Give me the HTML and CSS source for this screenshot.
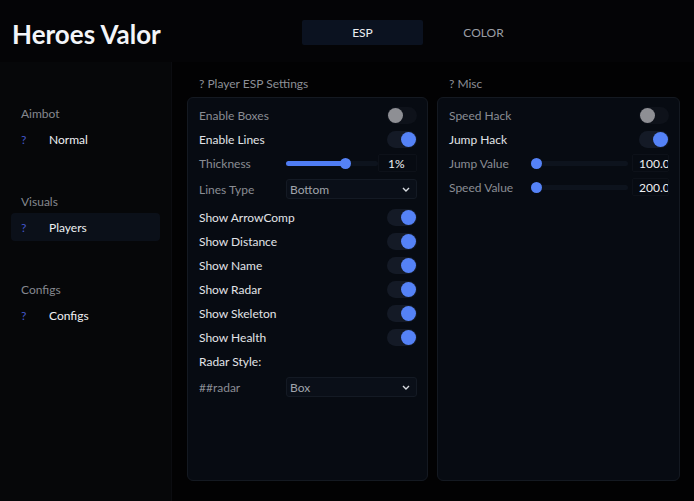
FILE: index.html
```html
<!DOCTYPE html>
<html>
<head>
<meta charset="utf-8">
<link rel="stylesheet" href="styles.css">
</head>
<body>
<div class="app">
  <header class="header">
    <div class="title">Heroes Valor</div>
    <nav class="tabs">
      <div class="tab active">ESP</div>
      <div class="tab">COLOR</div>
    </nav>
  </header>
  <div class="body">
    <aside class="sidebar">
      <div class="group">
        <div class="group-label">Aimbot</div>
        <div class="nav-item"><span class="q">?</span><span>Normal</span></div>
      </div>
      <div class="group">
        <div class="group-label">Visuals</div>
        <div class="nav-item selected"><span class="q">?</span><span>Players</span></div>
      </div>
      <div class="group">
        <div class="group-label">Configs</div>
        <div class="nav-item"><span class="q">?</span><span>Configs</span></div>
      </div>
    </aside>
    <main class="main">
      <section class="column col-left">
        <div class="heading">? Player ESP Settings</div>
        <div class="panel">
          <div class="row"><span class="label dim">Enable Boxes</span><span class="toggle"><span class="knob"></span></span></div>
          <div class="row"><span class="label">Enable Lines</span><span class="toggle on"><span class="knob"></span></span></div>
          <div class="row"><span class="label dim lw">Thickness</span><span class="slider"><span class="fill" style="width:60px"></span><span class="sknob" style="left:54px"></span></span><span class="value">1%</span></div>
          <div class="row combo-row"><span class="label dim lw">Lines Type</span><span class="combo"><span>Bottom</span><svg class="chev" width="8" height="5" viewBox="0 0 8 5"><path d="M1 1 L4 4 L7 1" fill="none" stroke="#d8dbe0" stroke-width="1.4"/></svg></span></div>
          <div class="row"><span class="label">Show ArrowComp</span><span class="toggle on"><span class="knob"></span></span></div>
          <div class="row"><span class="label">Show Distance</span><span class="toggle on"><span class="knob"></span></span></div>
          <div class="row"><span class="label">Show Name</span><span class="toggle on"><span class="knob"></span></span></div>
          <div class="row"><span class="label">Show Radar</span><span class="toggle on"><span class="knob"></span></span></div>
          <div class="row"><span class="label">Show Skeleton</span><span class="toggle on"><span class="knob"></span></span></div>
          <div class="row"><span class="label">Show Health</span><span class="toggle on"><span class="knob"></span></span></div>
          <div class="row"><span class="label">Radar Style:</span></div>
          <div class="row combo-row"><span class="label dim lw">##radar</span><span class="combo"><span>Box</span><svg class="chev" width="8" height="5" viewBox="0 0 8 5"><path d="M1 1 L4 4 L7 1" fill="none" stroke="#d8dbe0" stroke-width="1.4"/></svg></span></div>
        </div>
      </section>
      <section class="column col-right">
        <div class="heading">? Misc</div>
        <div class="panel">
          <div class="row"><span class="label dim">Speed Hack</span><span class="toggle"><span class="knob"></span></span></div>
          <div class="row"><span class="label">Jump Hack</span><span class="toggle on"><span class="knob"></span></span></div>
          <div class="row"><span class="label dim lw2">Jump Value</span><span class="slider s2"><span class="sknob" style="left:0"></span></span><span class="value v2">100.0</span></div>
          <div class="row"><span class="label dim lw2">Speed Value</span><span class="slider s2"><span class="sknob" style="left:0"></span></span><span class="value v2">200.0</span></div>
        </div>
      </section>
    </main>
  </div>
</div>
</body>
</html>
```
FILE: styles.css
```css
* { box-sizing: border-box; }
html, body { margin: 0; padding: 0; }
body {
  background: #030305;
  font-family: Lato, "Noto Sans", sans-serif;
  font-size: 12px;
  color: #e4e6ea;
  width: 694px;
  height: 501px;
  overflow: hidden;
}
.app { display: flex; flex-direction: column; height: 501px; }
.header {
  height: 62px;
  display: flex;
  align-items: flex-start;
  background: #040406;
}
.title {
  width: 302px;
  padding-left: 12px;
  padding-top: 19px;
  font-size: 26px;
  font-weight: 700;
  color: #f3f5f9;
  line-height: 30px;
}
.tabs { display: flex; margin-top: 20px; }
.tab {
  width: 121px;
  height: 25px;
  display: flex;
  align-items: center;
  justify-content: center;
  color: #9a9da4;
  font-size: 12px;
  border-radius: 2px;
}
.tab.active { background: #0b1220; color: #eceef2; }
.body { flex: 1; display: flex; }
.sidebar {
  width: 172px;
  background: #060709;
  border-right: 1px solid #0b0c10;
  padding: 40px 11px 0;
  display: flex;
  flex-direction: column;
  gap: 37px;
}
.group-label {
  height: 23px;
  line-height: 23px;
  padding-left: 10px;
  color: #85888f;
}
.nav-item {
  height: 28px;
  display: flex;
  align-items: center;
  padding-left: 10px;
  border-radius: 4px;
  color: #eef0f3;
}
.nav-item.selected { background: #0b1019; }
.q { width: 28px; color: #4357c9; }
.main {
  flex: 1;
  display: flex;
  gap: 9px;
  padding: 0 14px 20px 15px;
  background: #020203;
}
.column { display: flex; flex-direction: column; }
.col-left { width: 241px; }
.col-right { width: 243px; }
.heading {
  padding: 15px 0 0 12px;
  line-height: 14px;
  height: 35px;
  color: #8c8f96;
}
.panel {
  flex: 1;
  background: #070b12;
  border: 1px solid #141921;
  border-radius: 6px;
  padding: 5px 10px 0 11px;
}
.row {
  height: 24px;
  display: flex;
  align-items: center;
}
.combo-row { height: 28px; margin-bottom: 2px; }
.label { flex: 1; color: #e2e4e8; white-space: nowrap; }
.label.dim { color: #8a8d94; }
.label.lw { flex: 0 0 87px; }
.label.lw2 { flex: 0 0 82px; }
.toggle {
  width: 30px;
  height: 17px;
  border-radius: 9px;
  background: #0e121a;
  position: relative;
  flex: 0 0 auto;
  margin-top: 1px;
}
.toggle .knob {
  position: absolute;
  top: 1px;
  left: 1px;
  width: 15px;
  height: 15px;
  border-radius: 50%;
  background: #8e8f94;
}
.toggle.on { background: #141a26; }
.toggle.on .knob { left: 14px; background: #5582f6; }
.slider {
  width: 92px;
  height: 5px;
  background: #0d131d;
  border-radius: 3px;
  position: relative;
  margin-top: 1px;
}
.slider.s2 { width: 97px; }
.fill {
  position: absolute;
  left: 0; top: 0; bottom: 0;
  background: #4f7cf3;
  border-radius: 3px;
}
.sknob {
  position: absolute;
  top: -3px;
  width: 11px;
  height: 11px;
  border-radius: 50%;
  background: #5582f6;
}
.value {
  margin-left: auto;
  width: 39px;
  height: 18px;
  line-height: 18px;
  padding-left: 9px;
  color: #eef0f3;
  border: 1px solid #0d1119;
  border-radius: 2px;
  overflow: hidden;
  white-space: nowrap;
}
.value.v2 { width: 37px; padding-left: 6px; }
.combo {
  width: 131px;
  height: 20px;
  margin-left: auto;
  background: #0a0f18;
  border: 1px solid #141a24;
  border-radius: 3px;
  display: flex;
  align-items: center;
  justify-content: space-between;
  padding: 0 6px 0 3px;
  color: #a0a4ab;
}
.chev { display: block; }
```
